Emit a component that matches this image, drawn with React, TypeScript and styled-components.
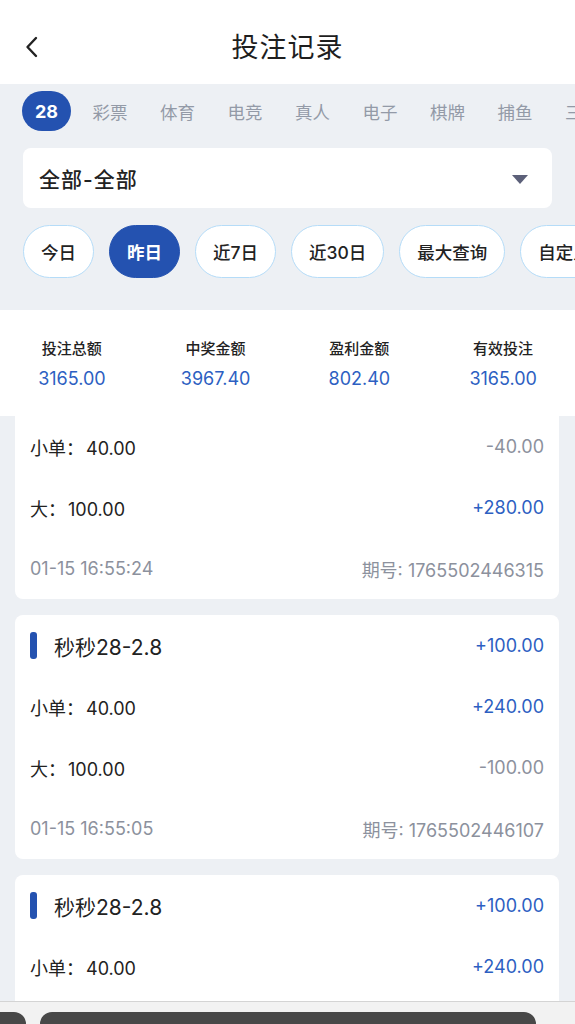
import React, { useLayoutEffect, useRef } from 'react';
import styled, { createGlobalStyle } from 'styled-components';

const palette = {
  bg: '#edf0f4',
  blue: '#2452b0',
  num: '#2d5fc2',
  text: '#1f1f1f',
  gray: '#8c919d',
  tab: '#939aa7',
  chipLine: '#b5dcf8',
};

const GlobalStyle = createGlobalStyle`
  * { box-sizing: border-box; }
  html, body { margin: 0; padding: 0; }
  body {
    font-family: 'Inter', 'Noto Sans CJK SC', sans-serif;
    background: #fff;
    color: ${palette.text};
  }
`;

type Line = { label: string; stake: string; result: string; win: boolean };
type Bet = { game: string; total: string; lines: Line[]; time: string; issue: string };

const tabs = ['28', '彩票', '体育', '电竞', '真人', '电子', '棋牌', '捕鱼', '三方'];
const ranges = ['今日', '昨日', '近7日', '近30日', '最大查询', '自定义'];

const summary = [
  { label: '投注总额', value: '3165.00' },
  { label: '中奖金额', value: '3967.40' },
  { label: '盈利金额', value: '802.40' },
  { label: '有效投注', value: '3165.00' },
];

const bets: Bet[] = [
  {
    game: '秒秒28-2.8',
    total: '+240.00',
    lines: [
      { label: '小单', stake: '40.00', result: '-40.00', win: false },
      { label: '大', stake: '100.00', result: '+280.00', win: true },
    ],
    time: '01-15 16:55:24',
    issue: '1765502446315',
  },
  {
    game: '秒秒28-2.8',
    total: '+100.00',
    lines: [
      { label: '小单', stake: '40.00', result: '+240.00', win: true },
      { label: '大', stake: '100.00', result: '-100.00', win: false },
    ],
    time: '01-15 16:55:05',
    issue: '1765502446107',
  },
  {
    game: '秒秒28-2.8',
    total: '+100.00',
    lines: [
      { label: '小单', stake: '40.00', result: '+240.00', win: true },
      { label: '大', stake: '100.00', result: '-100.00', win: false },
    ],
    time: '01-15 16:54:46',
    issue: '1765502445899',
  },
];

const App = () => {
  const listRef = useRef<HTMLDivElement>(null);

  // the list is scrolled down by one row
  useLayoutEffect(() => {
    if (listRef.current) listRef.current.scrollTop = 61;
  }, []);

  return (
    <React.Fragment>
      <GlobalStyle />
      <Page>
        <Header>
          <BackButton aria-label="back">
            <svg width="16" height="24" viewBox="0 0 16 24" fill="none">
              <path
                d="M12 3 L3.5 12 L12 21"
                stroke="#222"
                strokeWidth="2.4"
                strokeLinecap="round"
                strokeLinejoin="round"
              />
            </svg>
          </BackButton>
          <Title>投注记录</Title>
        </Header>

        <Filters>
          <TabRow>
            {tabs.map((t, i) => (
              <Tab key={t} $active={i === 0}>
                {t}
              </Tab>
            ))}
          </TabRow>

          <Select>
            <span>全部-全部</span>
            <Caret />
          </Select>

          <ChipRow>
            {ranges.map((r, i) => (
              <Chip key={r} $active={i === 1}>
                {r}
              </Chip>
            ))}
          </ChipRow>
        </Filters>

        <Summary>
          {summary.map((s) => (
            <SummaryItem key={s.label}>
              <p>{s.label}</p>
              <strong>{s.value}</strong>
            </SummaryItem>
          ))}
        </Summary>

        <List ref={listRef}>
          {bets.map((b) => (
            <Card key={b.issue}>
              <Row>
                <GameName>
                  <Mark />
                  {b.game}
                </GameName>
                <Amount $win>{b.total}</Amount>
              </Row>
              {b.lines.map((l) => (
                <Row key={l.label}>
                  <Stake>
                    {l.label}：<span>{l.stake}</span>
                  </Stake>
                  <Amount $win={l.win}>{l.result}</Amount>
                </Row>
              ))}
              <Row>
                <Meta>{b.time}</Meta>
                <Meta>期号: {b.issue}</Meta>
              </Row>
            </Card>
          ))}
        </List>
      </Page>

      <BrowserBar>
        <BarStub />
        <BarField />
      </BrowserBar>
    </React.Fragment>
  );
};

const Page = styled.div`
  height: 100vh;
  display: flex;
  flex-direction: column;
  overflow: hidden;
  background: ${palette.bg};
`;

const Header = styled.header`
  position: relative;
  flex: none;
  height: 84px;
  display: flex;
  align-items: center;
  justify-content: center;
  padding-top: 6px;
  background: #fff;
`;

const BackButton = styled.button`
  all: unset;
  position: absolute;
  left: 24px;
  top: 35px;
  display: flex;
  cursor: pointer;
`;

const Title = styled.h1`
  margin: 0;
  font-size: 27px;
  font-weight: 400;
  letter-spacing: 1px;
  color: #1e1e1e;
`;

const Filters = styled.section`
  flex: none;
  padding: 7px 0 32px;
  display: flex;
  flex-direction: column;
  gap: 17px;
`;

const TabRow = styled.div`
  display: flex;
  align-items: center;
  gap: 6.5px;
  padding-left: 22px;
  white-space: nowrap;
  overflow: hidden;
`;

const Tab = styled.div<{ $active?: boolean }>`
  flex: none;
  height: 40px;
  padding: 0 13px;
  display: flex;
  align-items: center;
  border-radius: 20px;
  font-size: ${(p) => (p.$active ? '18px' : '17.5px')};
  font-weight: ${(p) => (p.$active ? 700 : 400)};
  color: ${(p) => (p.$active ? '#fff' : palette.tab)};
  background: ${(p) => (p.$active ? palette.blue : 'transparent')};
  margin-right: ${(p) => (p.$active ? '2px' : '0')};
`;

const Select = styled.div`
  margin: 0 23px;
  height: 60px;
  border-radius: 8px;
  background: #fff;
  display: flex;
  align-items: center;
  justify-content: space-between;
  padding: 0 24px 0 16px;
  font-size: 21px;
  font-weight: 500;
  letter-spacing: 1px;
  color: #222;
`;

const Caret = styled.i`
  width: 0;
  height: 0;
  border-left: 8px solid transparent;
  border-right: 8px solid transparent;
  border-top: 9px solid #5c6079;
  margin-top: 2px;
`;

const ChipRow = styled.div`
  display: flex;
  gap: 15px;
  padding-left: 23px;
  overflow: hidden;
  white-space: nowrap;
`;

const Chip = styled.div<{ $active?: boolean }>`
  flex: none;
  height: 53px;
  padding: 0 17px;
  display: flex;
  align-items: center;
  border-radius: 27px;
  font-size: 17.5px;
  font-weight: ${(p) => (p.$active ? 700 : 500)};
  color: ${(p) => (p.$active ? '#fff' : '#222')};
  background: ${(p) => (p.$active ? palette.blue : '#fff')};
  border: 1.5px solid ${(p) => (p.$active ? palette.blue : palette.chipLine)};
`;

const Summary = styled.section`
  flex: none;
  height: 106px;
  display: grid;
  grid-template-columns: repeat(4, 1fr);
  padding-top: 29px;
  background: #fff;
`;

const SummaryItem = styled.div`
  display: flex;
  flex-direction: column;
  align-items: center;
  gap: 8px;

  & > p {
    margin: 0;
    font-size: 15px;
    line-height: 20px;
    font-weight: 500;
    color: #222;
  }

  & > strong {
    font-size: 18px;
    line-height: 24px;
    font-weight: 400;
    color: ${palette.num};
  }
`;

const List = styled.div`
  flex: 1;
  overflow-y: auto;
  scrollbar-width: none;
  display: flex;
  flex-direction: column;
  gap: 16px;
  padding: 0 16px 24px 15px;

  &::-webkit-scrollbar {
    display: none;
  }
`;

const Card = styled.article`
  flex: none;
  background: #fff;
  border-radius: 8px;
  padding: 0 15px;
`;

const Row = styled.div`
  height: 61px;
  display: flex;
  align-items: center;
  justify-content: space-between;
`;

const GameName = styled.div`
  display: flex;
  align-items: center;
  gap: 17px;
  font-size: 21px;
  font-weight: 400;
  color: #222;
`;

const Mark = styled.i`
  width: 7px;
  height: 27px;
  border-radius: 3px;
  background: ${palette.blue};
`;

const Stake = styled.div`
  font-size: 18px;
  font-weight: 400;
  color: #222;

  & > span {
    margin-left: 2px;
  }
`;

const Amount = styled.span<{ $win?: boolean }>`
  font-size: 18px;
  color: ${(p) => (p.$win ? palette.num : palette.gray)};
`;

const Meta = styled.span`
  font-size: 18px;
  color: ${palette.gray};
`;

const BrowserBar = styled.div`
  position: fixed;
  left: 0;
  right: 0;
  bottom: 0;
  height: 23px;
  display: flex;
  align-items: flex-end;
  gap: 14px;
  background: #f2f2f2;
  border-top: 1px solid #d4d4d4;
`;

const BarStub = styled.div`
  width: 26px;
  height: 12px;
  background: #484848;
  border-top-right-radius: 14px;
`;

const BarField = styled.div`
  width: 496px;
  height: 12px;
  background: #484848;
  border-radius: 14px 14px 0 0;
`;

export default App;
